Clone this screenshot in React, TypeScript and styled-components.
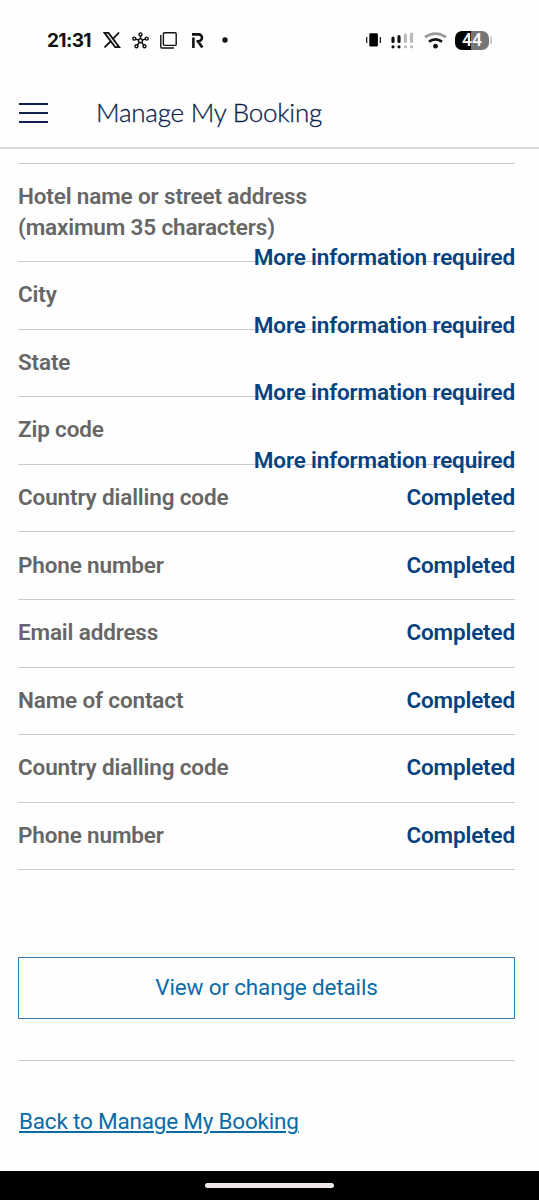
import React from "react";
import styled, { createGlobalStyle } from "styled-components";

const GlobalStyle = createGlobalStyle`
  * { box-sizing: border-box; }
  body { margin: 0; background: #fefefe; }
`;

const Screen = styled.div`
  width: 539px;
  height: 1200px;
  display: flex;
  flex-direction: column;
  overflow: hidden;
  background: #fefefe;
  font-family: Roboto, "Liberation Sans", sans-serif;
`;

const StatusBar = styled.div`
  height: 80px;
  flex: none;
  display: flex;
  justify-content: space-between;
  padding: 0 47px 0 47px;
  color: #111;
`;

const StatusGroup = styled.div`
  display: flex;
  align-items: center;
`;

const Clock = styled.time`
  width: 56px;
  padding-top: 2px;
  font: 700 19px/24px Inter, sans-serif;
  letter-spacing: -0.6px;
  white-space: nowrap;
`;

const Glyph = styled.svg<{ $gap?: number }>`
  display: block;
  flex: none;
  margin-left: ${(p) => p.$gap ?? 0}px;
`;

const Battery = styled.div`
  width: 34px;
  height: 19px;
  margin-left: 8px;
  border-radius: 7px;
  background: linear-gradient(90deg, #050505 46%, #767676 46%);
  color: #fff;
  font: 500 17.5px/19px Roboto, sans-serif;
  text-align: center;
`;

const BatteryTip = styled.span`
  width: 2px;
  height: 8px;
  margin-left: 1px;
  border-radius: 1px;
  background: #ccc;
`;

const Header = styled.header`
  height: 69px;
  flex: none;
  display: flex;
  align-items: center;
  padding: 0 19px 2px;
  border-bottom: 2px solid #d9d9d9;
`;

const MenuButton = styled.button`
  width: 29px;
  height: 20px;
  display: flex;
  flex-direction: column;
  justify-content: space-between;
  padding: 0;
  border: 0;
  background: none;
`;

const MenuLine = styled.span`
  height: 2px;
  width: 100%;
  background: #10204f;
`;

const Title = styled.h1`
  margin: 0 0 2px 48px;
  font: 300 26px/34px Lato, sans-serif;
  letter-spacing: -0.24px;
  -webkit-text-stroke: 0.3px #0b1f4b;
  color: #0b1f4b;
  white-space: nowrap;
`;

const Content = styled.main`
  flex: 1;
  padding: 14px 24px 0 18px;
`;

const List = styled.ul`
  margin: 0;
  padding: 0;
  list-style: none;
  border-top: 1px solid #cbcbcb;
`;

const Row = styled.li<{ $lines: number }>`
  height: ${(p) => 37.15 + p.$lines * 30.45}px;
  display: flex;
  flex-wrap: wrap;
  align-content: flex-start;
  padding-top: 17.2px;
  border-bottom: 1px solid #cbcbcb;
  font-size: 22.5px;
  font-weight: 600;
  line-height: 30.45px;
  letter-spacing: -0.15px;
  white-space: nowrap;
`;

const Label = styled.span`
  width: 60%;
  color: #666;
  white-space: pre-line;
`;

const Status = styled.span`
  margin-left: auto;
  color: #05417e;
`;

const DetailsButton = styled.button`
  display: block;
  width: 100%;
  height: 62px;
  margin: 87px 0 41px;
  padding: 0 0 2px;
  border: 1px solid #3480b3;
  background: transparent;
  color: #0b6ba8;
  font: 400 22.5px/30px Roboto, sans-serif;
  letter-spacing: -0.17px;
`;

const Divider = styled.hr`
  height: 1px;
  margin: 0;
  border: 0;
  background: #cbcbcb;
`;

const BackLink = styled.a`
  display: inline-block;
  margin: 45px 0 0 1px;
  color: #0b6ba8;
  font-size: 22.5px;
  line-height: 30px;
  letter-spacing: -0.2px;
  text-decoration: underline;
  text-decoration-thickness: 2px;
  text-underline-offset: 2px;
  white-space: nowrap;
`;

const NavigationBar = styled.footer`
  height: 29px;
  flex: none;
  display: flex;
  justify-content: center;
  padding-top: 12px;
  background: #000;
`;

const HomeIndicator = styled.span`
  width: 129px;
  height: 5px;
  border-radius: 3px;
  background: #eee8ee;
`;

const required = "More information required";
const completed = "Completed";

const rows = [
  { label: "Hotel name or street address\n(maximum 35 characters)", status: required, lines: 2 },
  { label: "City", status: required, lines: 1 },
  { label: "State", status: required, lines: 1 },
  { label: "Zip code", status: required, lines: 1 },
  { label: "Country dialling code", status: completed, lines: 1 },
  { label: "Phone number", status: completed, lines: 1 },
  { label: "Email address", status: completed, lines: 1 },
  { label: "Name of contact", status: completed, lines: 1 },
  { label: "Country dialling code", status: completed, lines: 1 },
  { label: "Phone number", status: completed, lines: 1 },
];

const XIcon = () => (
  <Glyph width="18" height="16" viewBox="0 0 18 16" fill="none" stroke="#111" strokeWidth="1.8">
    <path d="M1.5 .9h4L16.2 15.1h-4zM16 .5 9.8 7.2M7.5 9.3 1.5 15.5" />
  </Glyph>
);

const HubIcon = () => (
  <Glyph $gap={11} width="17" height="17" viewBox="0 0 17 17" fill="none" stroke="#111" strokeWidth="1.4">
    <circle cx="8.5" cy="8.7" r="2" />
    <circle cx="8.5" cy="2.4" r="1.5" />
    <circle cx="2.3" cy="6.6" r="1.5" />
    <circle cx="14.7" cy="6.6" r="1.5" />
    <circle cx="4.5" cy="14.2" r="1.5" />
    <circle cx="12.5" cy="14.2" r="1.5" />
    <path d="M8.5 3.9v2.8M3.8 7.1l2.8.9M13.2 7.1l-2.8.9M5.4 13l1.9-2.6M11.6 13l-1.9-2.6" />
  </Glyph>
);

const CopyIcon = () => (
  <Glyph $gap={11} width="17" height="17" viewBox="0 0 17 17" fill="none" stroke="#111" strokeWidth="1.4">
    <rect x="3.4" y=".8" width="12.8" height="12.6" rx="1" />
    <path d="M.8 3v12q0 1 1 1H14" />
  </Glyph>
);

const RIcon = () => (
  <Glyph $gap={15} width="12" height="15" viewBox="0 0 12 15" fill="none" stroke="#111" strokeWidth="2.6">
    <path d="M0 1.4h6.6a3.4 3.4 0 0 1 0 6.8H4.5M6 8.2l4.3 6.3M1.4 4.5V15" />
  </Glyph>
);

const DotIcon = () => (
  <Glyph $gap={18} width="6" height="6" viewBox="0 0 6 6">
    <circle cx="3" cy="3" r="2.7" fill="#111" />
  </Glyph>
);

const VibrateIcon = () => (
  <Glyph width="15" height="14" viewBox="0 0 15 14">
    <rect x="3.3" y=".3" width="8.6" height="13.2" rx="1.2" />
    <path d="M.7 4v6M14.3 4v6" stroke="#222" strokeWidth="1.3" />
  </Glyph>
);

const SignalIcon = () => (
  <Glyph $gap={10} width="23" height="17" viewBox="0 0 23 17" strokeWidth="3.2" strokeLinecap="round">
    <path d="M2 6.2v3.2M2 14.8v.01M8 4.7v4.7M8 14.8v.01" stroke="#111" />
    <path d="M14.4 3.2v6.2M14.4 14.8v.01M20.5 2v7.4M20.5 14.8v.01" stroke="#bbb" />
  </Glyph>
);

const WifiIcon = () => (
  <Glyph $gap={10} width="23" height="17" viewBox="0 0 23 17" fill="none" strokeWidth="2.8">
    <path d="M1 5.2Q11.5-2 22 5.2" stroke="#999" />
    <path d="M5 9.7q6.5-4.6 13 0" stroke="#111" />
    <circle cx="11.5" cy="14.2" r="2.4" fill="#111" />
  </Glyph>
);

export default function App() {
  return (
    <>
      <GlobalStyle />
      <Screen>
        <StatusBar>
          <StatusGroup>
            <Clock>21:31</Clock>
            <XIcon />
            <HubIcon />
            <CopyIcon />
            <RIcon />
            <DotIcon />
          </StatusGroup>
          <StatusGroup>
            <VibrateIcon />
            <SignalIcon />
            <WifiIcon />
            <Battery>44</Battery>
            <BatteryTip />
          </StatusGroup>
        </StatusBar>
        <Header>
          <MenuButton aria-label="Menu">
            <MenuLine />
            <MenuLine />
            <MenuLine />
          </MenuButton>
          <Title>Manage My Booking</Title>
        </Header>
        <Content>
          <List>
            {rows.map((row, index) => (
              <Row key={index} $lines={row.lines}>
                <Label>{row.label}</Label>
                <Status>{row.status}</Status>
              </Row>
            ))}
          </List>
          <DetailsButton>View or change details</DetailsButton>
          <Divider />
          <BackLink href="#">Back to Manage My Booking</BackLink>
        </Content>
        <NavigationBar>
          <HomeIndicator />
        </NavigationBar>
      </Screen>
    </>
  );
}
